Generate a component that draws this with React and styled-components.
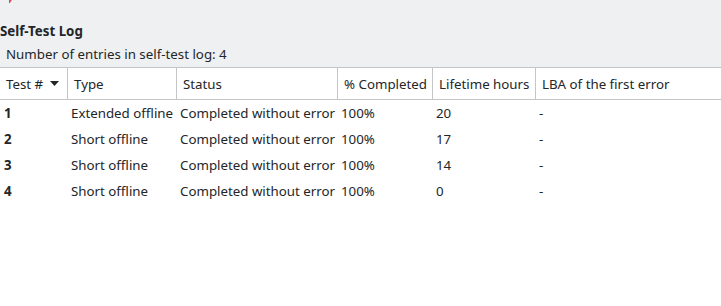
import React from "react";
import styled, { createGlobalStyle } from "styled-components";

const GlobalStyle = createGlobalStyle`
  html, body {
    margin: 0;
    padding: 0;
    background: #eff0f1;
  }
  body {
    font-family: "Noto Sans", "DejaVu Sans", sans-serif;
    font-size: 13.3px;
    color: #232629;
  }
`;

const Page = styled.div`
  display: flex;
  flex-direction: column;
  width: 721px;
  height: 306px;
  overflow: hidden;
`;

const TopStrip = styled.div`
  height: 21px;
  display: flex;
  align-items: flex-start;
  padding-left: 8px;
`;

const Title = styled.h2`
  margin: 0;
  font-size: 13.3px;
  font-weight: 700;
  line-height: 20px;
`;

const Summary = styled.div`
  margin-top: 3px;
  padding-left: 6px;
  line-height: 20px;
`;

const Grid = styled.div`
  margin-top: 3px;
  flex: 1;
  display: grid;
  grid-template-columns: 68px 109px 161px 95px 103px 1fr;
  grid-template-rows: 32px;
  grid-auto-rows: 26px;
  align-content: start;
  background: #ffffff;
  border-top: 1px solid #c3c5c7;
`;

const HeadCell = styled.div`
  display: flex;
  align-items: center;
  gap: 7px;
  padding-left: 6px;
  white-space: nowrap;
  background: #ffffff;
  border-bottom: 1px solid #c3c5c7;
  border-right: ${(p) => (p.$last ? "none" : "1px solid #c3c5c7")};
`;

const Cell = styled.div`
  display: flex;
  align-items: center;
  padding-left: ${(p) => (p.$first ? "4px" : "3px")};
  font-weight: ${(p) => (p.$first ? 700 : 400)};
  white-space: nowrap;
  overflow: hidden;
`;

const SortArrow = () => (
  <svg width="9" height="5" viewBox="0 0 9 5">
    <path d="M0 0 H9 L4.5 5 Z" fill="#232629" />
  </svg>
);

const columns = [
  "Test #",
  "Type",
  "Status",
  "% Completed",
  "Lifetime hours",
  "LBA of the first error",
];

const entries = [
  ["1", "Extended offline", "Completed without error", "100%", "20", "-"],
  ["2", "Short offline", "Completed without error", "100%", "17", "-"],
  ["3", "Short offline", "Completed without error", "100%", "14", "-"],
  ["4", "Short offline", "Completed without error", "100%", "0", "-"],
];

export default function App() {
  return (
    <Page>
      <GlobalStyle />
      <TopStrip>
        <svg width="4" height="4" viewBox="0 0 4 4">
          <path d="M1 0 H4 L3 1 L2 3 H1 Z" fill="#da4453" />
        </svg>
      </TopStrip>
      <Title>Self-Test Log</Title>
      <Summary>Number of entries in self-test log: {entries.length}</Summary>
      <Grid>
        {columns.map((c, i) => (
          <HeadCell key={c} $last={i === columns.length - 1}>
            {c}
            {i === 0 && <SortArrow />}
          </HeadCell>
        ))}
        {entries.map((row) =>
          row.map((v, i) => (
            <Cell key={row[0] + "-" + i} $first={i === 0}>
              {v}
            </Cell>
          ))
        )}
      </Grid>
    </Page>
  );
}
